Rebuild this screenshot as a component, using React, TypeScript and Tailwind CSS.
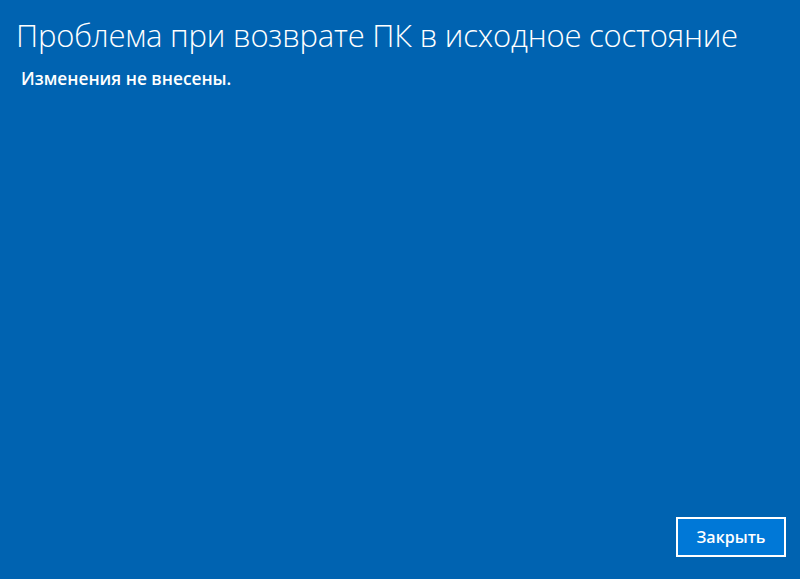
export default function App() {
  return (
    <div
      className="w-[800px] h-[579px] bg-[#0063b1] text-white flex flex-col overflow-hidden"
      style={{ fontFamily: '"Open Sans", "Noto Sans", sans-serif' }}
    >
      <h1 className="pl-[16px] pt-[14px] text-[31px] font-light leading-[42px] tracking-[-0.2px]">
        Проблема при возврате ПК в исходное состояние
      </h1>
      <p className="pl-[21px] mt-[12px] text-[17.3px] font-semibold leading-[22px]">
        Изменения не внесены.
      </p>
      <div className="flex-1" />
      <div className="flex justify-end pr-[14px] pb-[22px]">
        <button className="w-[110px] h-[40px] bg-[#0078d7] border-2 border-white text-[16px] font-semibold text-white">
          Закрыть
        </button>
      </div>
    </div>
  );
}
